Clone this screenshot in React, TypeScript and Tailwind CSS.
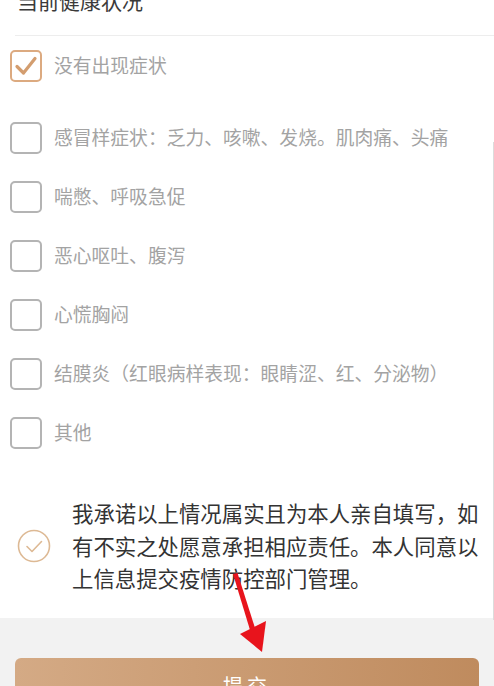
import React from "react";

const symptoms = [
  "感冒样症状：乏力、咳嗽、发烧。肌肉痛、头痛",
  "喘憋、呼吸急促",
  "恶心呕吐、腹泻",
  "心慌胸闷",
  "结膜炎（红眼病样表现：眼睛涩、红、分泌物）",
  "其他",
];

function Box({ checked }: { checked?: boolean }) {
  if (checked) {
    return (
      <div className="w-[32px] h-[32px] shrink-0 rounded-[5px] border-[2.5px] border-[#dcaa80] flex items-center justify-center">
        <svg width="24" height="24" viewBox="0 0 24 24" fill="none">
          <path d="M3 12.5 L9.5 19 L21 4.5" stroke="#d39d6f" strokeWidth="3.2" strokeLinecap="round" strokeLinejoin="round" />
        </svg>
      </div>
    );
  }
  return <div className="w-[32px] h-[32px] shrink-0 rounded-[5px] border-[2.5px] border-[#b4b4b4]" />;
}

function Row({ label, checked }: { label: string; checked?: boolean }) {
  return (
    <div className="h-[59px] flex items-center pl-[10px] gap-[12px]">
      <Box checked={checked} />
      <span className="text-[18.8px] leading-none text-[#a3a3a3] whitespace-nowrap">{label}</span>
    </div>
  );
}

export default function App() {
  return (
    <div
      className="relative w-[494px] h-[686px] overflow-hidden bg-white flex flex-col"
      style={{ fontFamily: '"Noto Sans CJK SC", "Noto Sans", sans-serif' }}
    >
      {/* 标题 */}
      <div className="ml-[15px] h-[36px] border-b border-[#ededed] shrink-0">
        <div className="-mt-[12px] pl-[2px] text-[21px] leading-[24px] text-[#3a3a3a]">当前健康状况</div>
      </div>

      {/* 症状选项 */}
      <div className="flex flex-col">
        <Row label="没有出现症状" checked />
        <div className="h-[13px]" />
        {symptoms.map((s) => (
          <Row key={s} label={s} />
        ))}
      </div>

      {/* 承诺 */}
      <div className="flex items-center pt-[35px] pb-[23px] pl-[17px]">
        <svg width="34" height="34" viewBox="0 0 34 34" fill="none" className="shrink-0">
          <circle cx="17" cy="17" r="15.5" stroke="#ddb994" strokeWidth="1.6" />
          <path d="M10 17.5 L15 22.5 L24.5 12.5" stroke="#ddb994" strokeWidth="1.6" strokeLinecap="round" strokeLinejoin="round" />
        </svg>
        <p className="ml-[21px] w-[410px] text-[21.4px] leading-[32.5px] text-[#333]">
          我承诺以上情况属实且为本人亲自填写，如有不实之处愿意承担相应责任。本人同意以上信息提交疫情防控部门管理。
        </p>
      </div>

      {/* 底部按钮区 */}
      <div className="flex-1 bg-[#f2f2f2] pt-[40px] px-[15px]">
        <button className="w-[464px] h-[56px] rounded-[6px] bg-gradient-to-r from-[#d4aa85] to-[#bf8b5e] text-white text-[20px] tracking-[4px]">
          提交
        </button>
      </div>

      {/* 右侧细线 */}
      <div className="absolute right-0 top-[142px] h-[478px] w-px bg-[#dcdcdc]" />

      {/* 红色箭头标注 */}
      <svg className="absolute left-0 top-0 pointer-events-none" width="494" height="686" viewBox="0 0 494 686">
        <polygon points="233,574 237.5,573 255,628 250,630" fill="#e8141c" />
        <polygon points="240,634 266,621 262,652" fill="#e8141c" />
      </svg>
    </div>
  );
}
